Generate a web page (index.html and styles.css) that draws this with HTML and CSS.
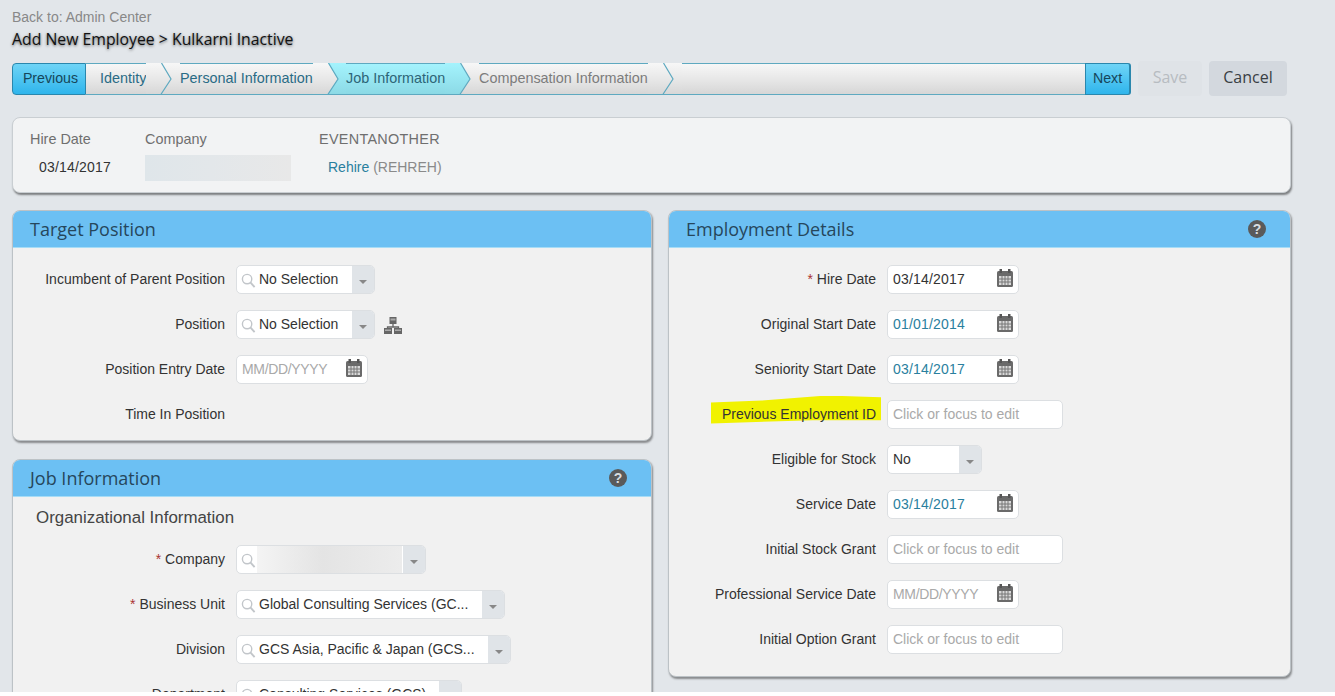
FILE: index.html
```html
<!DOCTYPE html>
<html lang="en">
<head>
    <meta charset="UTF-8">
    <title>Add New Employee</title>
    <link rel="stylesheet" href="styles.css">
</head>
<body>

<!-- Shared icons -->
<svg class="icon-defs" aria-hidden="true">
    <defs>
        <linearGradient id="grayFill" x1="0" y1="0" x2="0" y2="1">
            <stop offset="0" stop-color="#f7f7f7"/>
            <stop offset="0.55" stop-color="#e6e6e6"/>
            <stop offset="1" stop-color="#d6d6d6"/>
        </linearGradient>
        <linearGradient id="cyanFill" x1="0" y1="0" x2="0" y2="1">
            <stop offset="0" stop-color="#a4f3fd"/>
            <stop offset="1" stop-color="#8bd9e5"/>
        </linearGradient>
        <symbol id="icon-search" viewBox="0 0 16 16">
            <circle cx="6.5" cy="6.5" r="5" fill="none" stroke="#c2c6ca" stroke-width="1.5"/>
            <path d="M10 10l4.5 5" stroke="#c2c6ca" stroke-width="2"/>
        </symbol>
        <symbol id="icon-calendar" viewBox="0 0 16 18">
            <rect x="0" y="2" width="16" height="16" rx="1.5" fill="#6a6a6a"/>
            <rect x="2.5" y="0" width="2.5" height="4" fill="#555"/>
            <rect x="11" y="0" width="2.5" height="4" fill="#555"/>
            <path d="M2 7h12v9H2z" fill="#d9d9d9"/>
            <path d="M2 10h12M2 13h12M5 7v9M8 7v9M11 7v9" stroke="#777" stroke-width="1"/>
        </symbol>
        <symbol id="icon-org" viewBox="0 0 18 17">
            <rect x="5.5" y="0" width="7" height="7" fill="#666"/>
            <rect x="6.5" y="1.5" width="5" height="2" fill="#aaa"/>
            <path d="M9 7v3M3.500 12v-2h11v2" fill="none" stroke="#666" stroke-width="1.3"/>
            <rect x="0" y="11" width="8" height="6" fill="#666"/>
            <rect x="10" y="11" width="8" height="6" fill="#666"/>
            <rect x="1" y="12.5" width="6" height="1.5" fill="#aaa"/>
            <rect x="11" y="12.5" width="6" height="1.5" fill="#aaa"/>
        </symbol>
    </defs>
</svg>

<div class="back-link">Back to: Admin Center</div>
<div class="page-title">Add New Employee &gt; Kulkarni Inactive</div>

<!-- Wizard and actions -->
<div class="toolbar">
    <div class="wizard">
        <div class="wizard-btn wizard-prev">Previous</div>
        <div class="step step-first">Identity</div>
        <svg class="arrow" viewBox="0 0 34 32"><path d="M15 0L25 16L14 32H34V0Z" fill="url(#grayFill)"/><path d="M0 0H15L25 16L14 32H0Z" fill="url(#grayFill)"/><path d="M15.500 0L25 16L14.500 32M0 31.500H34" fill="none" stroke="#5ea9c0" stroke-width="1.200"/></svg>
        <div class="step step-personal">Personal Information</div>
        <svg class="arrow" viewBox="0 0 34 32"><path d="M0 0H15L25 16L14 32H0Z" fill="url(#grayFill)"/><path d="M15 0L25 16L14 32H34V0Z" fill="url(#cyanFill)"/><path d="M15.500 0L25 16L14.500 32M0 31.500H34" fill="none" stroke="#5ea9c0" stroke-width="1.200"/></svg>
        <div class="step step-current">Job Information</div>
        <svg class="arrow" viewBox="0 0 34 32"><path d="M15 0L25 16L14 32H34V0Z" fill="url(#grayFill)"/><path d="M0 0H15L25 16L14 32H0Z" fill="url(#cyanFill)"/><path d="M15.500 0L25 16L14.500 32M0 31.500H34" fill="none" stroke="#5ea9c0" stroke-width="1.200"/></svg>
        <div class="step step-todo">Compensation Information</div>
        <svg class="arrow" viewBox="0 0 34 32"><path d="M0 0H34V32H0Z" fill="url(#grayFill)"/><path d="M15.500 0L25 16L14.500 32M0 31.500H34" fill="none" stroke="#5ea9c0" stroke-width="1.200"/></svg>
        <div class="step step-fill"></div>
        <div class="wizard-btn wizard-next">Next</div>
    </div>
    <button class="btn btn-disabled">Save</button>
    <button class="btn">Cancel</button>
</div>

<!-- Summary -->
<div class="summary">
    <div class="summary-col col-date">
        <div class="summary-label">Hire Date</div>
        <div class="summary-value digits">03/14/2017</div>
    </div>
    <div class="summary-col col-company">
        <div class="summary-label">Company</div>
        <div class="redacted"></div>
    </div>
    <div class="summary-col">
        <div class="summary-label caps">EVENTANOTHER</div>
        <div class="summary-value"><span class="link">Rehire</span> <span class="muted">(REHREH)</span></div>
    </div>
</div>

<div class="columns">
    <div class="column">
        <!-- Target Position -->
        <div class="panel panel-left">
            <div class="panel-head">Target Position</div>
            <div class="panel-body">
                <div class="row">
                    <div class="label">Incumbent of Parent Position</div>
                    <div class="control lookup w-139">
                        <svg class="search"><use href="#icon-search"/></svg>
                        <span class="control-text">No Selection</span>
                        <span class="drop"><i></i></span>
                    </div>
                </div>
                <div class="row">
                    <div class="label">Position</div>
                    <div class="control lookup w-139">
                        <svg class="search"><use href="#icon-search"/></svg>
                        <span class="control-text">No Selection</span>
                        <span class="drop"><i></i></span>
                    </div>
                    <svg class="org"><use href="#icon-org"/></svg>
                </div>
                <div class="row">
                    <div class="label">Position Entry Date</div>
                    <div class="control date">
                        <span class="control-text placeholder">MM/DD/YYYY</span>
                        <svg class="cal"><use href="#icon-calendar"/></svg>
                    </div>
                </div>
                <div class="row">
                    <div class="label">Time In Position</div>
                </div>
            </div>
        </div>

        <!-- Job Information -->
        <div class="panel panel-left">
            <div class="panel-head">Job Information <span class="help">?</span></div>
            <div class="panel-body">
                <div class="section-title">Organizational Information</div>
                <div class="row">
                    <div class="label"><span class="req">*</span> Company</div>
                    <div class="control lookup w-190">
                        <svg class="search"><use href="#icon-search"/></svg>
                        <span class="blur"></span>
                        <span class="drop"><i></i></span>
                    </div>
                </div>
                <div class="row">
                    <div class="label"><span class="req">*</span> Business Unit</div>
                    <div class="control lookup w-269">
                        <svg class="search"><use href="#icon-search"/></svg>
                        <span class="control-text">Global Consulting Services (GC...</span>
                        <span class="drop"><i></i></span>
                    </div>
                </div>
                <div class="row">
                    <div class="label">Division</div>
                    <div class="control lookup w-275">
                        <svg class="search"><use href="#icon-search"/></svg>
                        <span class="control-text">GCS Asia, Pacific &amp; Japan (GCS...</span>
                        <span class="drop"><i></i></span>
                    </div>
                </div>
                <div class="row">
                    <div class="label">Department</div>
                    <div class="control lookup w-226">
                        <svg class="search"><use href="#icon-search"/></svg>
                        <span class="control-text">Consulting Services (GCS)</span>
                        <span class="drop"><i></i></span>
                    </div>
                </div>
            </div>
        </div>
    </div>

    <!-- Employment Details -->
    <div class="panel panel-right">
        <div class="panel-head">Employment Details <span class="help">?</span></div>
        <div class="panel-body">
            <div class="row">
                <div class="label"><span class="req">*</span> Hire Date</div>
                <div class="control date"><span class="control-text">03/14/2017</span><svg class="cal"><use href="#icon-calendar"/></svg></div>
            </div>
            <div class="row">
                <div class="label">Original Start Date</div>
                <div class="control date"><span class="control-text teal">01/01/2014</span><svg class="cal"><use href="#icon-calendar"/></svg></div>
            </div>
            <div class="row">
                <div class="label">Seniority Start Date</div>
                <div class="control date"><span class="control-text teal">03/14/2017</span><svg class="cal"><use href="#icon-calendar"/></svg></div>
            </div>
            <div class="row">
                <div class="label"><span class="marker">Previous Employment ID</span></div>
                <div class="control text"><span class="control-text placeholder">Click or focus to edit</span></div>
            </div>
            <div class="row">
                <div class="label">Eligible for Stock</div>
                <div class="control select"><span class="control-text">No</span><span class="drop"><i></i></span></div>
            </div>
            <div class="row">
                <div class="label">Service Date</div>
                <div class="control date"><span class="control-text teal">03/14/2017</span><svg class="cal"><use href="#icon-calendar"/></svg></div>
            </div>
            <div class="row">
                <div class="label">Initial Stock Grant</div>
                <div class="control text"><span class="control-text placeholder">Click or focus to edit</span></div>
            </div>
            <div class="row">
                <div class="label">Professional Service Date</div>
                <div class="control date"><span class="control-text placeholder">MM/DD/YYYY</span><svg class="cal"><use href="#icon-calendar"/></svg></div>
            </div>
            <div class="row">
                <div class="label">Initial Option Grant</div>
                <div class="control text"><span class="control-text placeholder">Click or focus to edit</span></div>
            </div>
        </div>
    </div>
</div>

</body>
</html>
```

FILE: styles.css
```css
html {
    background: #fff;
}

body {
    font-family: "Liberation Sans", Arial, sans-serif;
    font-size: 14px;
    color: #333;
    background: #e2e6ea;
    margin: 0;
    padding: 0 12px;
    width: 1311px;
    height: 692px;
    overflow: hidden;
}

.icon-defs {
    position: absolute;
    width: 0;
    height: 0;
}

.back-link {
    padding-top: 7px;
    line-height: 20px;
    color: #888;
}

.page-title {
    font-family: "Open Sans", sans-serif;
    font-size: 15.8px;
    line-height: 25px;
    color: #111;
    text-shadow: 0 1px 3px rgba(0, 0, 0, 0.6);
}

/* Wizard */
.toolbar {
    display: flex;
    align-items: center;
    gap: 7px;
    height: 35px;
    margin-top: 9px;
}

.wizard {
    display: flex;
    width: 1119px;
    height: 32px;
}

.wizard-btn {
    display: flex;
    align-items: center;
    justify-content: center;
    box-sizing: border-box;
    height: 32px;
    padding-bottom: 2px;
    font-size: 14.2px;
    color: #16465a;
    background: linear-gradient(#6fd4f6, #2fb5ec);
    border: 1px solid #2a87ad;
}

.wizard-prev {
    width: 74px;
    padding-left: 3px;
    border-radius: 4px 0 0 4px;
}

.wizard-next {
    width: 46px;
    border-right-width: 2px;
    border-radius: 0 3px 3px 0;
}

.step {
    display: flex;
    align-items: center;
    flex: none;
    box-sizing: border-box;
    height: 32px;
    padding-bottom: 2px;
    font-size: 14.4px;
    white-space: nowrap;
    color: #2a6b85;
    background: linear-gradient(#f7f7f7, #e6e6e6 55%, #d6d6d6);
    border-top: 1px solid #5ea9c0;
    border-bottom: 1px solid #5ea9c0;
}

.step-first {
    width: 60px;
    padding-left: 14px;
}

.step-personal {
    width: 133px;
}

.step-current {
    width: 99px;
    margin-left: -1px;
    color: #2d6577;
    background: linear-gradient(#a4f3fd, #8bd9e5);
}

.step-todo {
    width: 169px;
    color: #7c7c7c;
}

.step-fill {
    flex: 1;
}

.arrow {
    flex: none;
    width: 34px;
    height: 32px;
}

.btn {
    width: 78px;
    height: 35px;
    padding: 0 0 3px;
    font-family: "Open Sans", sans-serif;
    font-size: 16px;
    color: #3a3f44;
    background: #d3d8de;
    border: none;
    border-radius: 4px;
}

.btn-disabled {
    width: 64px;
    color: #b7bcc1;
    background: #dfe3e7;
}

/* Summary card */
.summary {
    display: flex;
    box-sizing: border-box;
    width: 1279px;
    height: 76px;
    margin-top: 21px;
    padding: 10px 17px 0;
    background: #f2f3f4;
    border: 1px solid #c9ced2;
    border-radius: 8px;
    box-shadow: 1px 2px 2px rgba(0, 0, 0, 0.45);
}

.summary-col {
    display: flex;
    flex-direction: column;
}

.col-date {
    width: 115px;
}

.col-company {
    width: 174px;
}

.summary-label {
    font-size: 14.4px;
    line-height: 22px;
    color: #6f6f6f;
}

.caps {
    letter-spacing: 0.3px;
}

.summary-value {
    padding: 4px 0 0 9px;
    line-height: 26px;
}

.digits {
    letter-spacing: 0.2px;
}

.link {
    color: #2a7f9e;
}

.muted {
    color: #8a8a8a;
}

.redacted {
    width: 146px;
    height: 26px;
    margin-top: 5px;
    background: linear-gradient(90deg, #dfe6ea, #e3e7ea 45%, #e8e8e8);
}

/* Panels */
.columns {
    display: grid;
    grid-template-columns: 640px 623px;
    gap: 16px;
    align-items: start;
    margin-top: 17px;
}

.column {
    display: flex;
    flex-direction: column;
    gap: 18px;
}

.panel {
    background: #f1f1f1;
    border: 1px solid #bcc2c6;
    border-radius: 8px;
    box-shadow: 1px 2px 2px rgba(0, 0, 0, 0.4);
}

.panel-left {
    --label-width: 212px;
}

.panel-right {
    --label-width: 207px;
    padding-bottom: 11px;
}

.panel-head {
    display: flex;
    align-items: center;
    justify-content: space-between;
    box-sizing: border-box;
    height: 37px;
    padding: 0 24px 0 17px;
    font-family: "Open Sans", sans-serif;
    font-size: 18px;
    color: #26475c;
    background: #6cc0f3;
    border-bottom: 1px solid #a6dcf6;
    border-radius: 7px 7px 0 0;
}

.help {
    display: flex;
    align-items: center;
    justify-content: center;
    width: 18px;
    height: 18px;
    font-family: "Liberation Sans", sans-serif;
    font-size: 14px;
    font-weight: bold;
    color: #d8dde0;
    background: #5a5a5a;
    border-radius: 50%;
}

.panel-body {
    padding: 9px 0 3px;
}

.section-title {
    margin-top: -9px;
    padding: 2px 0 0 23px;
    font-size: 16.9px;
    line-height: 38px;
    color: #444;
}

.row {
    display: flex;
    align-items: center;
    gap: 11px;
    height: 45px;
}

.label {
    flex: none;
    width: var(--label-width);
    padding-bottom: 2px;
    text-align: right;
    white-space: nowrap;
}

.req {
    color: #a33;
}

.marker {
    position: relative;
    z-index: 0;
}

.marker::before {
    content: "";
    position: absolute;
    z-index: -1;
    top: -10px;
    bottom: -2px;
    left: -11px;
    right: -5px;
    background: #f1f200;
    clip-path: polygon(0 25%, 30% 18%, 68% 0, 100% 6%, 100% 88%, 60% 88%, 0 100%);
}

/* Form controls */
.control {
    display: flex;
    align-items: center;
    flex: none;
    box-sizing: border-box;
    height: 29px;
    background: #fff;
    border: 1px solid #dcdfe2;
    border-radius: 5px;
    overflow: hidden;
}

.control-text {
    flex: 1;
    padding: 0 0 2px 5px;
    white-space: nowrap;
}

.lookup .control-text {
    padding-left: 3px;
}

.date .control-text {
    letter-spacing: 0.2px;
}

.date .placeholder {
    letter-spacing: -0.34px;
}

.w-139 {
    width: 139px;
}

.w-190 {
    width: 190px;
}

.w-226 {
    width: 226px;
}

.w-269 {
    width: 269px;
}

.w-275 {
    width: 275px;
}

.date {
    width: 132px;
}

.text {
    width: 176px;
}

.select {
    width: 95px;
}

.placeholder {
    color: #a9a9a9;
}

.teal {
    color: #2a7f9e;
}

.search {
    flex: none;
    width: 15px;
    height: 15px;
    margin: 2px 0 0 4px;
}

.cal {
    flex: none;
    width: 16px;
    height: 18px;
    margin: -3px 5px 0 0;
}

.org {
    flex: none;
    width: 18px;
    height: 17px;
    margin: 1px 0 0 -2px;
}

.drop {
    display: flex;
    align-items: center;
    justify-content: center;
    flex: none;
    width: 22px;
    height: 100%;
    background: #e0e4e8;
}

.drop i {
    margin-top: 4px;
    border-top: 4px solid #888;
    border-left: 4px solid transparent;
    border-right: 4px solid transparent;
}

.blur {
    flex: 1;
    align-self: stretch;
    margin-left: 1px;
    margin-right: 1px;
    background: linear-gradient(90deg, #f4f4f4, #e4e4e4 45%, #ececec);
}
```
